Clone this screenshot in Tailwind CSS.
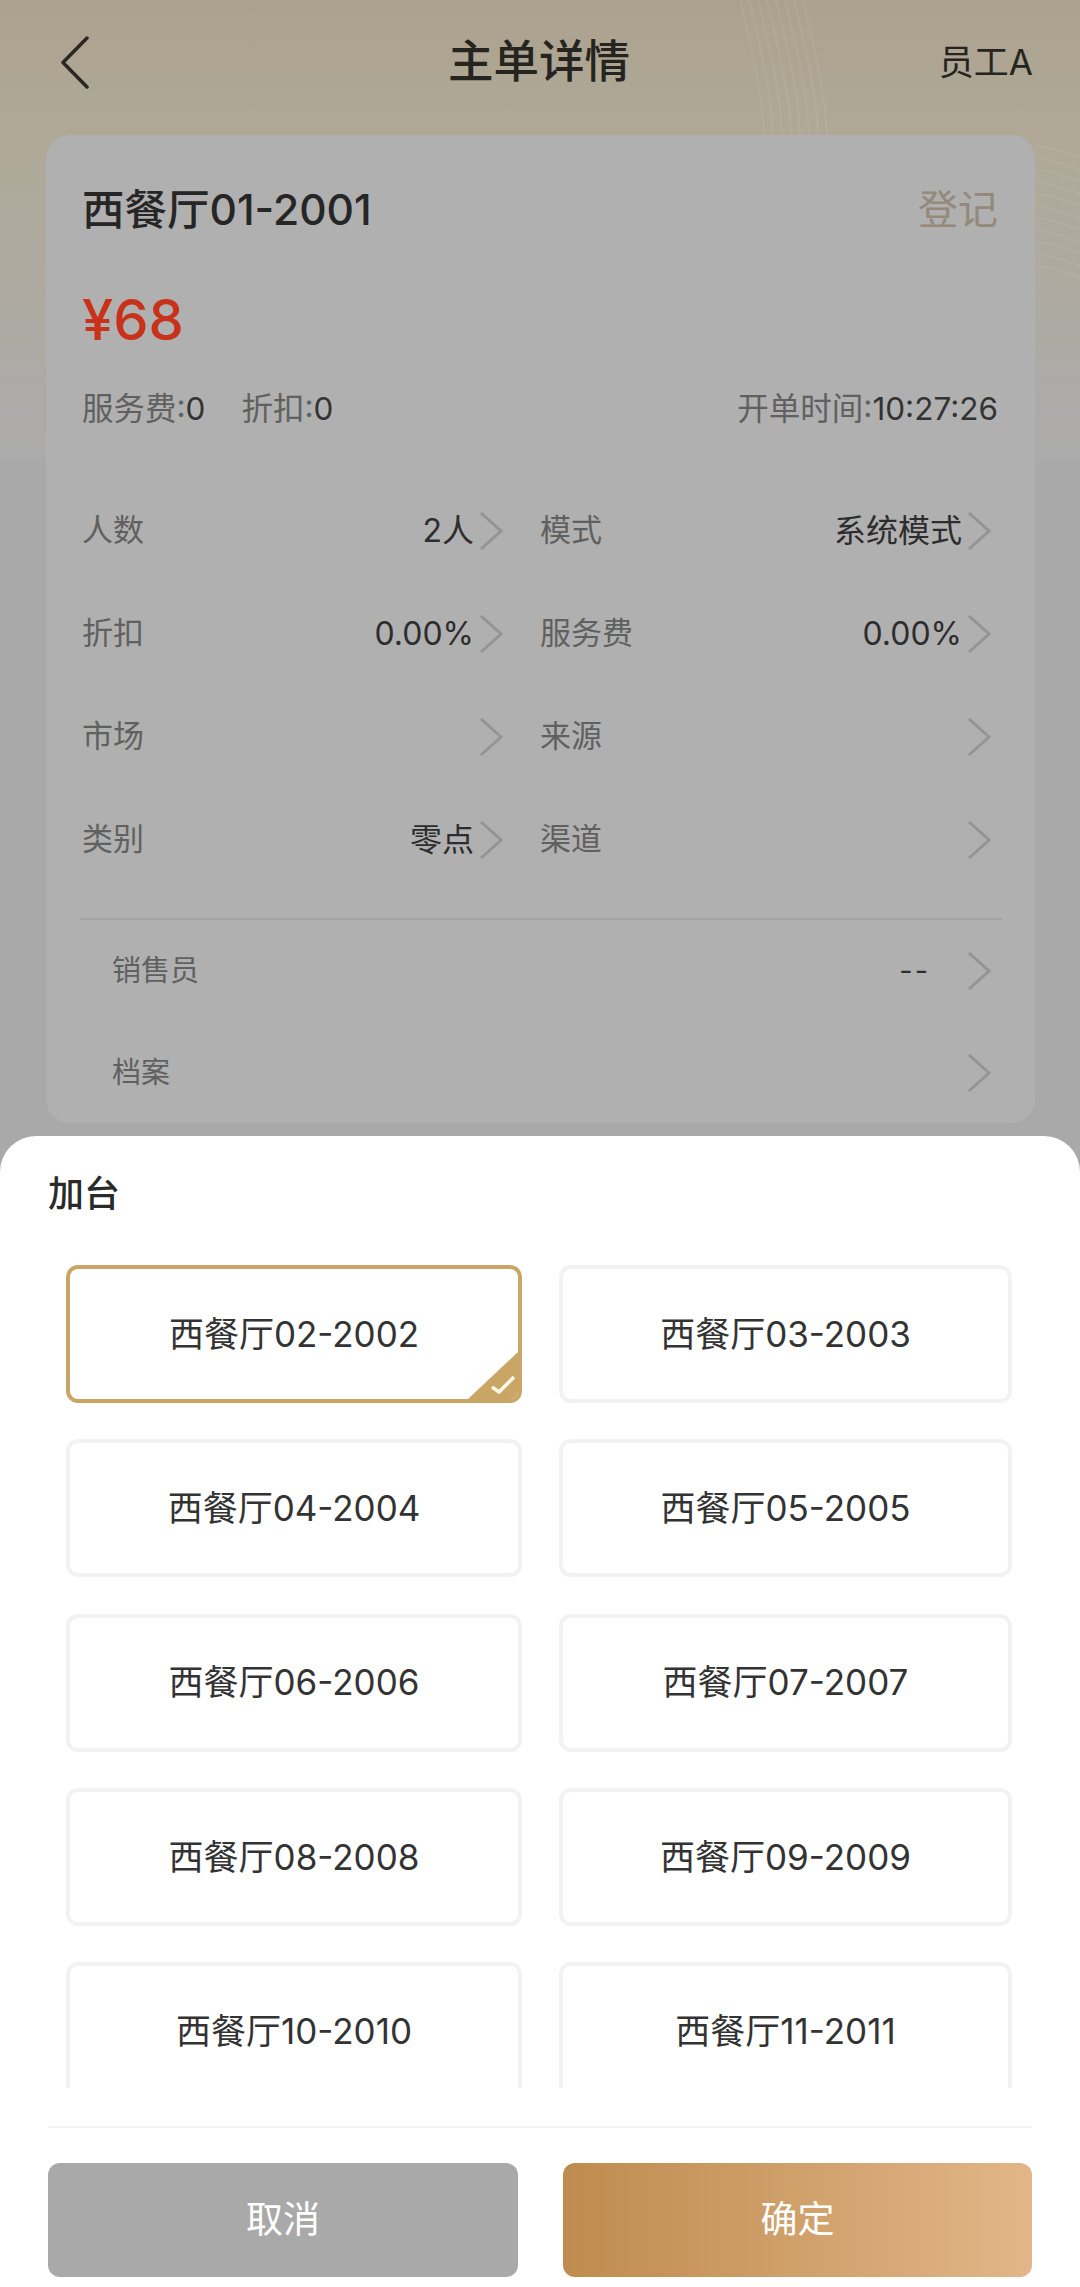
<!DOCTYPE html>
<html lang="zh">
<head>
<meta charset="UTF-8" />
<title>主单详情</title>
<script src="https://cdn.jsdelivr.net/npm/@tailwindcss/browser@4"></script>
</head>
<body class="font-['Inter','Noto_Sans_CJK_SC',sans-serif]">
<div class="relative w-[1080px] h-[2287px] overflow-hidden bg-[#a9a9a9]">
  <!-- 顶部背景 -->
  <div class="absolute inset-x-0 top-0 h-[460px] bg-gradient-to-b from-[#aba28e] via-[#b0a998] via-30% to-[#ababab]"></div>
  <svg class="absolute top-0 left-[740px]" width="340" height="300" viewBox="0 0 340 300" fill="none" stroke="#ffffff" stroke-opacity="0.07" stroke-width="1.5">
    <path d="M0 0 C12 50 22 90 24 135" />
    <path d="M9 0 C21 50 31 90 33 135" />
    <path d="M18 0 C30 50 40 90 42 135" />
    <path d="M27 0 C39 50 49 90 51 135" />
    <path d="M36 0 C48 50 58 90 60 135" />
    <path d="M45 0 C57 50 67 90 69 135" />
    <path d="M54 0 C66 50 76 90 78 135" />
    <path d="M63 0 C75 50 85 90 87 135" />
    <path d="M296 145 C310 148 325 152 340 158" />
    <path d="M296 157 C310 160 325 164 340 170" />
    <path d="M296 169 C310 172 325 176 340 182" />
    <path d="M296 181 C310 184 325 188 340 194" />
    <path d="M296 193 C310 196 325 200 340 206" />
    <path d="M296 205 C310 208 325 212 340 218" />
    <path d="M296 217 C310 220 325 224 340 230" />
    <path d="M296 229 C310 232 325 236 340 242" />
    <path d="M296 241 C310 244 325 248 340 254" />
    <path d="M296 253 C310 256 325 260 340 266" />
    <path d="M296 265 C310 268 325 272 340 278" />
  </svg>

  <div class="relative">
    <!-- 导航 -->
    <header class="flex items-center justify-between h-[124px] pl-[60px] pr-[47px]">
      <svg width="29" height="53" viewBox="0 0 29 53" fill="none" stroke="#2b2822" stroke-width="3.5" stroke-linecap="round" stroke-linejoin="round">
        <path d="M27 2 L3 26.5 L27 51" />
      </svg>
      <h1 class="absolute left-0 right-0 text-center text-[45.5px] font-medium text-[#26241f] pr-[2px]">主单详情</h1>
      <span class="text-[35px] text-[#26241f]">员工A</span>
    </header>

    <!-- 主单卡片 -->
    <section class="ml-[46px] mr-[45px] mt-[11px] h-[988px] rounded-[24px] bg-[#b0b0b0] pl-[36px] pr-[37px]">
      <div class="flex items-center justify-between pt-[45px] leading-[60px]">
        <span class="text-[42.5px] font-medium text-[#262626]">西餐厅01-2001</span>
        <span class="text-[40px] text-[#94897a]">登记</span>
      </div>
      <div class="mt-[48px] text-[56px] font-medium leading-[64px] text-[#c8321a]">¥68</div>
      <div class="flex items-center justify-between mt-[35px] text-[31.5px] leading-[44px] text-[#606060]">
        <div class="flex gap-[36px]">
          <span>服务费:<span class="text-[#333333]">0</span></span>
          <span>折扣:<span class="text-[#333333]">0</span></span>
        </div>
        <span>开单时间:<span class="text-[#333333]">10:27:26</span></span>
      </div>

      <div class="grid grid-cols-[421px_451px] gap-x-[37px] mt-[48px] text-[31px] text-[#606060]">
        <div class="flex items-center h-[103px]"><span>人数</span><span class="ml-auto text-[32px] text-[#2d2d2d]">2人</span><svg class="ml-[5px] shrink-0" width="24" height="38" viewBox="0 0 24 38" fill="none" stroke="#949494" stroke-width="3"><path d="M2 1 L22 19 L2 37" /></svg></div>
        <div class="flex items-center h-[103px]"><span>模式</span><span class="ml-auto text-[32px] text-[#2d2d2d]">系统模式</span><svg class="ml-[5px] shrink-0" width="24" height="38" viewBox="0 0 24 38" fill="none" stroke="#949494" stroke-width="3"><path d="M2 1 L22 19 L2 37" /></svg></div>
        <div class="flex items-center h-[103px]"><span>折扣</span><span class="ml-auto text-[32px] text-[#2d2d2d]">0.00%</span><svg class="ml-[5px] shrink-0" width="24" height="38" viewBox="0 0 24 38" fill="none" stroke="#949494" stroke-width="3"><path d="M2 1 L22 19 L2 37" /></svg></div>
        <div class="flex items-center h-[103px]"><span>服务费</span><span class="ml-auto text-[32px] text-[#2d2d2d]">0.00%</span><svg class="ml-[5px] shrink-0" width="24" height="38" viewBox="0 0 24 38" fill="none" stroke="#949494" stroke-width="3"><path d="M2 1 L22 19 L2 37" /></svg></div>
        <div class="flex items-center h-[103px]"><span>市场</span><svg class="ml-auto shrink-0" width="24" height="38" viewBox="0 0 24 38" fill="none" stroke="#949494" stroke-width="3"><path d="M2 1 L22 19 L2 37" /></svg></div>
        <div class="flex items-center h-[103px]"><span>来源</span><svg class="ml-auto shrink-0" width="24" height="38" viewBox="0 0 24 38" fill="none" stroke="#949494" stroke-width="3"><path d="M2 1 L22 19 L2 37" /></svg></div>
        <div class="flex items-center h-[103px]"><span>类别</span><span class="ml-auto text-[32px] text-[#2d2d2d]">零点</span><svg class="ml-[5px] shrink-0" width="24" height="38" viewBox="0 0 24 38" fill="none" stroke="#949494" stroke-width="3"><path d="M2 1 L22 19 L2 37" /></svg></div>
        <div class="flex items-center h-[103px]"><span>渠道</span><svg class="ml-auto shrink-0" width="24" height="38" viewBox="0 0 24 38" fill="none" stroke="#949494" stroke-width="3"><path d="M2 1 L22 19 L2 37" /></svg></div>
      </div>

      <div class="border-t-[2px] border-[#a3a3a3] -ml-[2px] -mr-[4px] mt-[27px] pl-[32px] pr-[11px] text-[29px] text-[#606060]">
        <div class="flex items-center h-[102px]"><span>销售员</span><span class="ml-auto text-[#2d2d2d] tracking-[2px]">--</span><svg class="ml-[37px] shrink-0" width="24" height="38" viewBox="0 0 24 38" fill="none" stroke="#949494" stroke-width="3"><path d="M2 1 L22 19 L2 37" /></svg></div>
        <div class="flex items-center h-[102px]"><span>档案</span><svg class="ml-auto shrink-0" width="24" height="38" viewBox="0 0 24 38" fill="none" stroke="#949494" stroke-width="3"><path d="M2 1 L22 19 L2 37" /></svg></div>
      </div>
    </section>
  </div>

  <!-- 加台弹层 -->
  <div class="absolute inset-x-0 top-[1136px] bottom-0 rounded-t-[36px] bg-white">
    <h2 class="pl-[48px] pt-[33px] text-[36px] font-medium leading-[50px] text-[#2a2a2a]">加台</h2>
    <div class="mt-[46px] h-[823px] overflow-hidden px-[66px]">
      <div class="grid grid-cols-[456px_453px] gap-x-[37px] gap-y-[36.25px] text-[35px] text-[#333333]">
        <div class="relative flex items-center justify-center h-[138px] rounded-[12px] border-[4px] border-[#c9a566] overflow-hidden">西餐厅02-2002
          <svg class="absolute right-0 bottom-0" width="50" height="47" viewBox="0 0 50 47" fill="none"><path d="M0 47 L50 0 L50 47 Z" fill="#c9a566" /><path d="M24 35 L31 40 L46 25" stroke="#fff8e8" stroke-width="3.5" /></svg>
        </div>
        <div class="flex items-center justify-center h-[138px] rounded-[12px] border-[4px] border-[#f2f2f2]">西餐厅03-2003</div>
        <div class="flex items-center justify-center h-[138px] rounded-[12px] border-[4px] border-[#f2f2f2]">西餐厅04-2004</div>
        <div class="flex items-center justify-center h-[138px] rounded-[12px] border-[4px] border-[#f2f2f2]">西餐厅05-2005</div>
        <div class="flex items-center justify-center h-[138px] rounded-[12px] border-[4px] border-[#f2f2f2]">西餐厅06-2006</div>
        <div class="flex items-center justify-center h-[138px] rounded-[12px] border-[4px] border-[#f2f2f2]">西餐厅07-2007</div>
        <div class="flex items-center justify-center h-[138px] rounded-[12px] border-[4px] border-[#f2f2f2]">西餐厅08-2008</div>
        <div class="flex items-center justify-center h-[138px] rounded-[12px] border-[4px] border-[#f2f2f2]">西餐厅09-2009</div>
        <div class="flex items-center justify-center h-[138px] rounded-[12px] border-[4px] border-[#f2f2f2]">西餐厅10-2010</div>
        <div class="flex items-center justify-center h-[138px] rounded-[12px] border-[4px] border-[#f2f2f2]">西餐厅11-2011</div>
      </div>
    </div>
    <div class="mx-[48px] mt-[38px] border-t-[2px] border-[#f3f3f3]"></div>
    <div class="flex justify-between mx-[48px] mt-[35px] text-[37px] text-white">
      <button class="w-[470px] h-[114px] rounded-[12px] bg-[#a9a9a9]">取消</button>
      <button class="w-[469px] h-[114px] rounded-[12px] bg-gradient-to-r from-[#bf8b4e] to-[#e2b688]">确定</button>
    </div>
  </div>
</div>
</body>
</html>
